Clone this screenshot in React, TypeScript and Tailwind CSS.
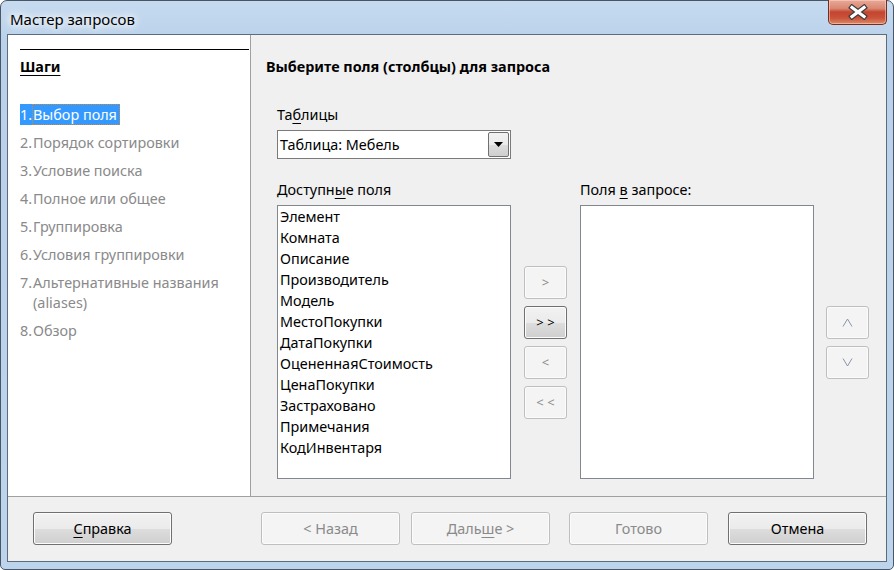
import React from "react";

const font = { fontFamily: '"Noto Sans", "Open Sans", sans-serif' };

function WinButton({
  children,
  enabled,
  className = "",
}: {
  children: React.ReactNode;
  enabled?: boolean;
  className?: string;
}) {
  return (
    <div
      className={
        "flex items-center justify-center rounded-[3px] border " +
        (enabled
          ? "border-[#707070] bg-[linear-gradient(to_bottom,#f2f2f2_0%,#ebebeb_50%,#dddddd_51%,#cfcfcf_100%)] text-black shadow-[inset_0_0_0_1px_#fcfcfc] "
          : "border-[#bfbfbf] bg-[#f4f4f4] text-[#8a8a8a] shadow-[inset_0_0_0_1px_#fbfbfb] ") +
        className
      }
    >
      {children}
    </div>
  );
}

const fields = [
  "Элемент",
  "Комната",
  "Описание",
  "Производитель",
  "Модель",
  "МестоПокупки",
  "ДатаПокупки",
  "ОцененнаяСтоимость",
  "ЦенаПокупки",
  "Застраховано",
  "Примечания",
  "КодИнвентаря",
];

const steps: [string, React.ReactNode][] = [
  ["2.", "Порядок сортировки"],
  ["3.", "Условие поиска"],
  ["4.", "Полное или общее"],
  ["5.", "Группировка"],
  ["6.", "Условия группировки"],
  ["7.", <>Альтернативные названия<br />(aliases)</>],
  ["8.", "Обзор"],
];

export default function App() {
  return (
    <div
      className="w-[894px] h-[570px] bg-white text-[14.4px] leading-[20px]"
      style={font}
    >
      <div className="w-[894px] h-[570px] flex flex-col border border-[#4a5566] rounded-t-[7px] rounded-b-[5px] bg-[linear-gradient(to_bottom,#c6dbf0_0%,#b9d1ea_40px,#bcd4ec_100%)] px-[6px] pb-[7px]">
        {/* title bar */}
        <div className="h-[33px] flex items-start justify-between shrink-0">
          <div className="pl-[3px] pt-[8px] text-[15px] text-black [text-shadow:0_0_6px_#ffffff,0_0_10px_#ffffff,0_0_14px_#ffffff]">
            Мастер запросов
          </div>
          <div className="mt-[-1px] w-[59px] h-[25px] rounded-b-[5px] border border-t-0 border-[#7b2a20] bg-[linear-gradient(to_bottom,#e9a998_0%,#d88872_35%,#c4452f_50%,#c9533a_75%,#dd8a66_100%)] shadow-[inset_0_0_0_1px_rgba(255,220,210,0.5)] flex items-center justify-center">
            <svg width="24" height="16" viewBox="0 0 24 16">
              <path d="M6 3.5 L18 12.5 M18 3.5 L6 12.5" stroke="#3b3b3b" strokeWidth="5.5" strokeLinecap="square" />
              <path d="M6 3.5 L18 12.5 M18 3.5 L6 12.5" stroke="#ffffff" strokeWidth="3.2" strokeLinecap="square" />
            </svg>
          </div>
        </div>

        {/* client area */}
        <div className="flex-1 flex flex-col border border-[#5d6b7b] bg-[#f0f0f0]">
          <div className="h-[461px] flex shrink-0">
            {/* left panel */}
            <div className="w-[242px] bg-white border-r border-[#a0a0a0] pt-[14px] shrink-0 box-content">
              <div className="ml-[12px] mr-[1px] h-px bg-black" />
              <div className="ml-[12px] mt-[7px] font-bold underline underline-offset-[3px] text-black">
                Шаги
              </div>
              <div className="mt-[27px] ml-[12px] flex flex-col gap-[8px]">
                <div className="flex">
                  <div className="flex bg-[#3399ff] text-white h-[21px] items-center">
                    <span className="w-[12px]">1.</span>
                    <span className="border border-dotted border-[#c98a3a] pr-[2px] leading-[19px]">
                      Выбор поля
                    </span>
                  </div>
                </div>
                {steps.map(([n, t], i) => (
                  <div key={i} className="flex text-[#8a8a8a]">
                    <span className="w-[12px] shrink-0">{n}</span>
                    <span className="pl-px">{t}</span>
                  </div>
                ))}
              </div>
            </div>

            {/* right panel */}
            <div className="flex-1 pt-[22px] pl-[15px]">
              <div className="font-bold text-black">
                Выберите поля (столбцы) для запроса
              </div>
              <div className="pl-[11px] mt-[28px]">
                <div className="text-black">
                  Та<span className="underline underline-offset-[3px]">б</span>лицы
                </div>
                <div className="mt-[5px] w-[234px] h-[29px] bg-white border border-[#7a7a7a] flex items-center justify-between pl-[2px] pr-[1px]">
                  <span className="text-black">Таблица: Мебель</span>
                  <div className="w-[21px] h-[25px] border border-[#707070] rounded-[2px] bg-[linear-gradient(to_bottom,#f2f2f2_0%,#ebebeb_50%,#dddddd_51%,#cfcfcf_100%)] flex items-center justify-center">
                    <svg width="9" height="5" viewBox="0 0 9 5">
                      <path d="M0 0 H9 L4.5 5 Z" fill="#000" />
                    </svg>
                  </div>
                </div>

                <div className="mt-[21px] flex items-end">
                  <div className="flex flex-col">
                    <div className="text-black">
                      Доступн<span className="underline underline-offset-[3px]">ы</span>е поля
                    </div>
                    <div className="mt-[5px] w-[234px] h-[274px] bg-white border border-[#828790] pl-[2px] text-black leading-[21px]">
                      {fields.map((f) => (
                        <div key={f}>{f}</div>
                      ))}
                    </div>
                  </div>
                  <div className="ml-[13px] h-[274px] flex flex-col justify-center gap-[7px]">
                    <WinButton className="w-[43px] h-[33px] text-[13px]">&gt;</WinButton>
                    <WinButton enabled className="w-[43px] h-[33px] text-[13px]">&gt;&nbsp;&gt;</WinButton>
                    <WinButton className="w-[43px] h-[33px] text-[13px]">&lt;</WinButton>
                    <WinButton className="w-[43px] h-[33px] text-[13px]">&lt;&nbsp;&lt;</WinButton>
                  </div>
                  <div className="ml-[13px] flex flex-col">
                    <div className="text-black">
                      Поля <span className="underline underline-offset-[3px]">в</span> запросе:
                    </div>
                    <div className="mt-[5px] w-[234px] h-[274px] bg-white border border-[#828790]" />
                  </div>
                  <div className="ml-[12px] h-[274px] flex flex-col justify-center gap-[7px]">
                    <WinButton className="w-[43px] h-[33px]">
                      <svg width="11" height="9" viewBox="0 0 11 9">
                        <path d="M1 8.5 L5.5 1 L10 8.5" fill="none" stroke="#8a94a8" strokeWidth="1" />
                      </svg>
                    </WinButton>
                    <WinButton className="w-[43px] h-[33px]">
                      <svg width="11" height="9" viewBox="0 0 11 9">
                        <path d="M1 0.5 L5.5 8 L10 0.5" fill="none" stroke="#8a94a8" strokeWidth="1" />
                      </svg>
                    </WinButton>
                  </div>
                </div>
              </div>
            </div>
          </div>

          {/* bottom buttons */}
          <div className="flex-1 border-t border-[#a0a0a0] pt-[15px] pl-[25px] flex items-start">
            <WinButton enabled className="w-[139px] h-[33px]">
              <span>
                <span className="underline underline-offset-[3px]">С</span>правка
              </span>
            </WinButton>
            <WinButton className="ml-[89px] w-[139px] h-[33px]">&lt; Назад</WinButton>
            <WinButton className="ml-[11px] w-[139px] h-[33px]">
              <span>
                Даль<span className="underline underline-offset-[3px]">ш</span>е &gt;
              </span>
            </WinButton>
            <WinButton className="ml-[19px] w-[139px] h-[33px]">Готово</WinButton>
            <WinButton enabled className="ml-[20px] w-[139px] h-[33px]">Отмена</WinButton>
          </div>
        </div>
      </div>
    </div>
  );
}
